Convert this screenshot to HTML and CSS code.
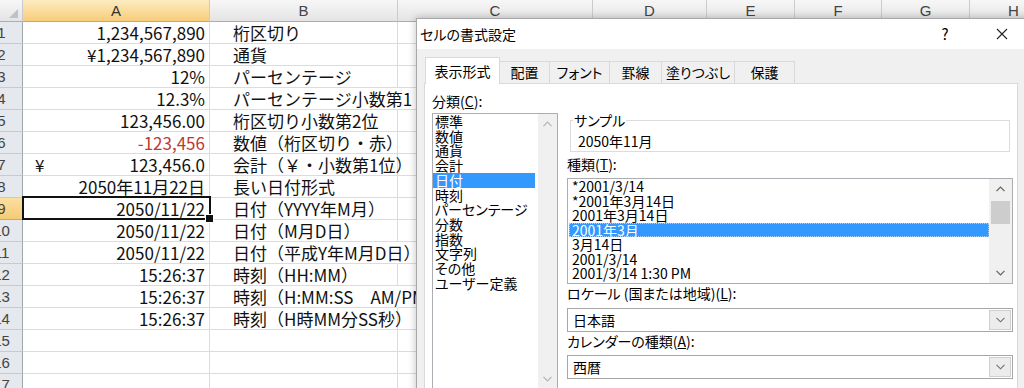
FILE: index.html
```html
<!DOCTYPE html>
<html lang="ja">
<head>
  <meta charset="UTF-8" />
  <title>セルの書式設定</title>
  <link rel="stylesheet" href="styles.css">
</head>
<body>
  <div class="sheet">
    <div class="row head">
      <div class="hd corner"><span class="tri"></span></div>
      <div class="hd col active">A</div>
      <div class="hd col">B</div>
      <div class="hd col">C</div>
      <div class="hd col">D</div>
      <div class="hd col">E</div>
      <div class="hd col">F</div>
      <div class="hd col">G</div>
      <div class="hd col">H</div>
    </div>

    <div class="row"><div class="hd num">1</div><div class="cell a">1,234,567,890</div><div class="cell b">桁区切り</div><div class="cell"></div></div>
    <div class="row"><div class="hd num">2</div><div class="cell a">¥1,234,567,890</div><div class="cell b">通貨</div><div class="cell"></div></div>
    <div class="row"><div class="hd num">3</div><div class="cell a">12%</div><div class="cell b">パーセンテージ</div><div class="cell"></div></div>
    <div class="row"><div class="hd num">4</div><div class="cell a">12.3%</div><div class="cell b spill">パーセンテージ小数第1</div><div class="cell"></div></div>
    <div class="row"><div class="hd num">5</div><div class="cell a">123,456.00</div><div class="cell b">桁区切り小数第2位</div><div class="cell"></div></div>
    <div class="row"><div class="hd num">6</div><div class="cell a red">-123,456</div><div class="cell b">数値（桁区切り・赤）</div><div class="cell"></div></div>
    <div class="row"><div class="hd num">7</div><div class="cell a acc"><span>¥</span><span>123,456.0</span></div><div class="cell b">会計（￥・小数第1位）</div><div class="cell"></div></div>
    <div class="row"><div class="hd num">8</div><div class="cell a">2050年11月22日</div><div class="cell b">長い日付形式</div><div class="cell"></div></div>
    <div class="row"><div class="hd num active">9</div><div class="cell a sel">2050/11/22</div><div class="cell b">日付（YYYY年M月）</div><div class="cell"></div></div>
    <div class="row"><div class="hd num">10</div><div class="cell a">2050/11/22</div><div class="cell b">日付（M月D日）</div><div class="cell"></div></div>
    <div class="row"><div class="hd num">11</div><div class="cell a">2050/11/22</div><div class="cell b spill">日付（平成Y年M月D日）</div><div class="cell"></div></div>
    <div class="row"><div class="hd num">12</div><div class="cell a">15:26:37</div><div class="cell b">時刻（HH:MM）</div><div class="cell"></div></div>
    <div class="row"><div class="hd num">13</div><div class="cell a">15:26:37</div><div class="cell b spill">時刻（H:MM:SS　AM/PM）</div><div class="cell"></div></div>
    <div class="row"><div class="hd num">14</div><div class="cell a">15:26:37</div><div class="cell b">時刻（H時MM分SS秒）</div><div class="cell"></div></div>
    <div class="row"><div class="hd num">15</div><div class="cell a"></div><div class="cell b"></div><div class="cell"></div></div>
    <div class="row"><div class="hd num">16</div><div class="cell a"></div><div class="cell b"></div><div class="cell"></div></div>
    <div class="row"><div class="hd num">17</div><div class="cell a"></div><div class="cell b"></div><div class="cell"></div></div>
  </div>

  <div class="dialog">
    <div class="titlebar">
      <span class="title">セルの書式設定</span>
      <span class="tbtn help">?</span>
      <span class="tbtn">
        <svg width="12" height="12" viewBox="0 0 12 12"><path d="M1 1 L11 11 M11 1 L1 11" stroke="#222" stroke-width="1.1" fill="none"/></svg>
      </span>
    </div>

    <div class="tabs">
      <div class="tab current" style="width:75px">表示形式</div>
      <div class="tab" style="width:50px">配置</div>
      <div class="tab" style="width:60px">フォント</div>
      <div class="tab" style="width:52px">罫線</div>
      <div class="tab" style="width:73px">塗りつぶし</div>
      <div class="tab" style="width:60px">保護</div>
    </div>

    <div class="panel">
      <div class="left">
        <div class="label">分類(<u>C</u>):</div>
        <div class="listbox cat">
          <div class="items">
            <div>標準</div>
            <div>数値</div>
            <div>通貨</div>
            <div>会計</div>
            <div class="picked">日付</div>
            <div>時刻</div>
            <div>パーセンテージ</div>
            <div>分数</div>
            <div>指数</div>
            <div>文字列</div>
            <div>その他</div>
            <div>ユーザー定義</div>
          </div>
          <div class="vscroll off">
            <div class="arrow"><svg width="9" height="6" viewBox="0 0 9 6"><path d="M0.5 5.2 L4.5 1.2 L8.5 5.2" fill="none" stroke="#b4b4b4" stroke-width="1.2"/></svg></div>
            <div class="arrow"><svg width="9" height="6" viewBox="0 0 9 6"><path d="M0.5 0.8 L4.5 4.8 L8.5 0.8" fill="none" stroke="#b4b4b4" stroke-width="1.2"/></svg></div>
          </div>
        </div>
      </div>

      <div class="right">
        <fieldset class="sample">
          <legend>サンプル</legend>
          <div>2050年11月</div>
        </fieldset>

        <div class="label kind">種類(<u>T</u>):</div>
        <div class="listbox types">
          <div class="items">
            <div>*2001/3/14</div>
            <div>*2001年3月14日</div>
            <div>2001年3月14日</div>
            <div class="picked focus">2001年3月</div>
            <div>3月14日</div>
            <div>2001/3/14</div>
            <div>2001/3/14 1:30 PM</div>
          </div>
          <div class="vscroll">
            <div class="arrow"><svg width="9" height="6" viewBox="0 0 9 6"><path d="M0.5 5.2 L4.5 1.2 L8.5 5.2" fill="none" stroke="#606060" stroke-width="1.2"/></svg></div>
            <div class="thumb"></div>
            <div class="fill"></div>
            <div class="arrow"><svg width="9" height="6" viewBox="0 0 9 6"><path d="M0.5 0.8 L4.5 4.8 L8.5 0.8" fill="none" stroke="#606060" stroke-width="1.2"/></svg></div>
          </div>
        </div>

        <div class="label tight">ロケール (国または地域)(<u>L</u>):</div>
        <div class="combo">
          <span class="value">日本語</span>
          <span class="drop"><svg width="9" height="6" viewBox="0 0 9 6"><path d="M0.5 0.8 L4.5 4.8 L8.5 0.8" fill="none" stroke="#707070" stroke-width="1.1"/></svg></span>
        </div>

        <div class="label tight">カレンダーの種類(<u>A</u>):</div>
        <div class="combo second">
          <span class="value">西暦</span>
          <span class="drop"><svg width="9" height="6" viewBox="0 0 9 6"><path d="M0.5 0.8 L4.5 4.8 L8.5 0.8" fill="none" stroke="#707070" stroke-width="1.1"/></svg></span>
        </div>
      </div>
    </div>
  </div>
</body>
</html>
```

FILE: styles.css
```css
* {
  box-sizing: border-box;
}
body {
  margin: 0;
  width: 1024px;
  height: 388px;
  overflow: hidden;
  position: relative;
  background: #fff;
  font-family: "Noto Sans CJK JP", sans-serif;
  color: #111;
}

/* spreadsheet */
.sheet {
  margin-left: -19px;
}
.row {
  display: grid;
  grid-template-columns: 42px 187px 188px 195px 114px 88px 87px 88px 88px;
  height: 22px;
}
.hd {
  font-family: "Liberation Sans", Arial, sans-serif;
  font-size: 15px;
  line-height: 21px;
  color: #444;
  text-align: center;
}
.head .hd {
  background: linear-gradient(#f7f7f7, #e4e4e4);
  border-right: 1px solid #c9cbce;
  border-bottom: 1px solid #a9aeb4;
}
.head .hd.active {
  background: linear-gradient(#fdebc0, #f7cd7a);
  border-bottom-color: #e2a23e;
  color: #333;
}
.corner {
  display: flex;
  justify-content: flex-end;
  align-items: flex-end;
  padding: 0 4px 3px 0;
}
.tri {
  width: 0;
  height: 0;
  border-left: 9px solid transparent;
  border-bottom: 9px solid #bcc2ca;
}
.num {
  background: #e5e8ec;
  border-right: 1px solid #9ea6af;
  border-bottom: 1px solid #c7cbd1;
}
.num.active {
  background: linear-gradient(#fbdf9f, #f6cb75);
  border-bottom-color: #e2a23e;
}
.cell {
  font-size: 17px;
  line-height: 21px;
  white-space: nowrap;
  border-right: 1px solid #dadcdd;
  border-bottom: 1px solid #dadcdd;
}
.cell.a {
  text-align: right;
  padding-right: 4px;
}
.cell.b {
  padding-left: 23px;
}
.cell.spill {
  border-right-color: transparent;
}
.red {
  color: #c0392f;
}
.acc {
  display: flex;
  justify-content: space-between;
  padding-left: 12px;
}
.sel {
  position: relative;
}
.sel::after {
  content: "";
  position: absolute;
  left: -1px;
  top: -2px;
  right: -2px;
  bottom: -1px;
  border: 2px solid #111;
}
.sel::before {
  content: "";
  position: absolute;
  right: -5px;
  bottom: -4px;
  width: 7px;
  height: 7px;
  background: #111;
  border: 1px solid #fff;
  z-index: 2;
}

/* dialog */
.dialog {
  position: absolute;
  left: 416px;
  top: 18px;
  width: 620px;
  height: 380px;
  background: #f0f0f0;
  border: 1px solid #a8a8a8;
  box-shadow: 0 0 8px rgba(0, 0, 0, 0.25);
  font-size: 14px;
  line-height: 16px;
  font-feature-settings: "palt";
  color: #000;
}
.titlebar {
  height: 30px;
  background: #fff;
  display: flex;
  align-items: center;
  padding-left: 3px;
}
.title {
  flex: 1;
  font-size: 14px;
}
.tbtn {
  width: 46px;
  display: flex;
  justify-content: center;
  align-items: center;
}
.tbtn.help {
  font-size: 15px;
  margin-right: 11px;
}
.tbtn:last-child {
  margin-right: 10px;
}
.tabs {
  display: flex;
  align-items: flex-end;
  padding: 8px 0 0 8px;
  position: relative;
  z-index: 1;
}
.tab {
  height: 22px;
  line-height: 20px;
  text-align: center;
  border: 1px solid #d9d9d9;
  border-bottom: none;
  border-left: none;
  background: #f0f0f0;
}
.tab.current {
  height: 26px;
  line-height: 26px;
  background: #fff;
  border-left: 1px solid #d9d9d9;
  margin-bottom: -1px;
  height: 27px;
}
.panel {
  width: 594px;
  height: 320px;
  margin-left: 7px;
  background: #fff;
  border: 1px solid #d9d9d9;
  padding: 9px 4px 0 7px;
  display: flex;
  gap: 9px;
}
.left {
  width: 126px;
}
.label {
  height: 16px;
  white-space: nowrap;
}
.listbox {
  border: 1px solid #abadb3;
  background: #fff;
  display: flex;
}
.listbox .items {
  flex: 1;
  white-space: nowrap;
}
.listbox.cat {
  margin-top: 4px;
  height: 277px;
}
.cat .items {
  line-height: 14.7px;
}
.cat .items div {
  padding-left: 2px;
  margin-right: 3px;
}
.picked {
  background: #3399ff;
  color: #fff;
}
.vscroll {
  width: 19px;
  background: #f0f0f0;
  display: flex;
  flex-direction: column;
  justify-content: space-between;
}
.arrow {
  height: 20px;
  display: flex;
  justify-content: center;
  align-items: center;
}
.right {
  width: 446px;
  display: flex;
  flex-direction: column;
}
.sample {
  margin: 19px 3px 0 3px;
  border: 1px solid #dcdcdc;
  padding: 5px 7px 2px;
  min-width: 0;
}
.sample legend {
  padding: 0 1px;
  margin-left: -5px;
  line-height: 16px;
}
.kind {
  margin-top: 4px;
}
.listbox.types {
  margin-top: 6px;
  height: 106px;
}
.types .items {
  line-height: 14.5px;
}
.types .items div {
  margin-left: 1px;
  padding-left: 3px;
}
.focus {
  outline: 1px dotted #a8d0ff;
  outline-offset: -1px;
}
.types .vscroll {
  width: 23px;
}
.thumb {
  height: 23px;
  margin: 2px 2px 0;
  background: #cdcdcd;
}
.fill {
  flex: 1;
}
.tight {
  margin-top: 1px;
}
.combo {
  margin-top: 7px;
  height: 24px;
  border: 1px solid #a6a6a6;
  background: #fff;
  display: flex;
  align-items: stretch;
}
.combo.second {
  margin-top: 6px;
}
.combo .value {
  flex: 1;
  padding-left: 5px;
  line-height: 22px;
}
.drop {
  width: 22px;
  margin: 1px;
  background: #ececec;
  border: 1px solid #cfcfcf;
  display: flex;
  justify-content: center;
  align-items: center;
}
```
